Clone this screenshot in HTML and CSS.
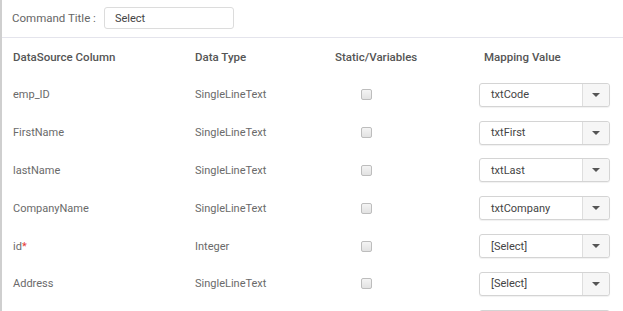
FILE: index.html
```html
<!DOCTYPE html>
<html lang="en">

<head>
    <meta charset="UTF-8">
    <meta name="viewport" content="width=device-width, initial-scale=1.0">
    <title>Command Mapping</title>
    <link rel="stylesheet" href="styles.css">
</head>

<body>
    <div class="panel">
        <div class="title-bar">
            <label class="title-label">Command Title :</label>
            <input class="title-input" type="text" value="Select">
        </div>

        <div class="mapping">
            <div class="row head">
                <div>DataSource Column</div>
                <div>Data Type</div>
                <div>Static/Variables</div>
                <div class="head-map">Mapping Value</div>
            </div>

            <div class="row">
                <div>emp_ID</div>
                <div>SingleLineText</div>
                <div><span class="check"></span></div>
                <div class="select"><span class="select-text">txtCode</span><span class="select-btn"><i class="caret"></i></span></div>
            </div>
            <div class="row">
                <div>FirstName</div>
                <div>SingleLineText</div>
                <div><span class="check"></span></div>
                <div class="select"><span class="select-text">txtFirst</span><span class="select-btn"><i class="caret"></i></span></div>
            </div>
            <div class="row">
                <div>lastName</div>
                <div>SingleLineText</div>
                <div><span class="check"></span></div>
                <div class="select"><span class="select-text">txtLast</span><span class="select-btn"><i class="caret"></i></span></div>
            </div>
            <div class="row">
                <div>CompanyName</div>
                <div>SingleLineText</div>
                <div><span class="check"></span></div>
                <div class="select"><span class="select-text">txtCompany</span><span class="select-btn"><i class="caret"></i></span></div>
            </div>
            <div class="row">
                <div>id<span class="req">*</span></div>
                <div>Integer</div>
                <div><span class="check"></span></div>
                <div class="select"><span class="select-text">[Select]</span><span class="select-btn"><i class="caret"></i></span></div>
            </div>
            <div class="row">
                <div>Address</div>
                <div>SingleLineText</div>
                <div><span class="check"></span></div>
                <div class="select"><span class="select-text">[Select]</span><span class="select-btn"><i class="caret"></i></span></div>
            </div>
            <!-- next row starts just below the fold -->
            <div class="row">
                <div></div>
                <div></div>
                <div></div>
                <div class="select"><span class="select-text"></span><span class="select-btn"><i class="caret"></i></span></div>
            </div>
        </div>
    </div>
</body>

</html>
```

FILE: styles.css
```css
* {
    margin: 0;
    padding: 0;
    box-sizing: border-box;
    font-family: Roboto, 'Liberation Sans', sans-serif;
}

body {
    background: #fff;
    color: #6a6a6a;
    font-size: 11px;
    overflow: hidden;
}

.panel {
    border-left: 2px solid #cfcfcf;
    min-height: 100vh;
}

.title-bar {
    height: 38px;
    display: flex;
    align-items: center;
    gap: 8px;
    padding: 0 0 1px 10px;
    border-bottom: 1px solid #e4e4ec;
}

.title-label {
    color: #666;
    font-size: 11.5px;
}

.title-input {
    width: 130px;
    height: 22px;
    border: 1px solid #dcdcdc;
    border-radius: 3px;
    padding: 0 10px;
    font-size: 11px;
    color: #444;
    outline: none;
}

.row {
    display: grid;
    grid-template-columns: 182px 140px 144px 131px;
    align-items: center;
    height: 37.8px;
    padding-left: 11px;
}

.head {
    height: 38px;
    color: #555;
    font-weight: 500;
    font-size: 11.5px;
}

.head-map {
    padding-left: 5px;
}

.check {
    display: block;
    width: 11px;
    height: 11px;
    margin-left: 26px;
    border: 1px solid #bdbdbd;
    border-radius: 2px;
    background: linear-gradient(#f4f4f4, #e2e2e2);
}

.req {
    color: #e53935;
}

.select {
    display: flex;
    height: 24px;
    border: 1px solid #d4d4d4;
    border-radius: 3px;
    box-shadow: 0 1px 1px rgba(0, 0, 0, 0.06);
    background: #fff;
}

.select-text {
    flex: 1;
    display: flex;
    align-items: center;
    padding-left: 11px;
    color: #444;
}

.select-btn {
    width: 27px;
    display: flex;
    align-items: center;
    justify-content: center;
    background: #f6f6f6;
    border-left: 1px solid #dedede;
    border-radius: 0 3px 3px 0;
}

.caret {
    width: 0;
    height: 0;
    border-left: 4px solid transparent;
    border-right: 4px solid transparent;
    border-top: 4px solid #555;
}
```
